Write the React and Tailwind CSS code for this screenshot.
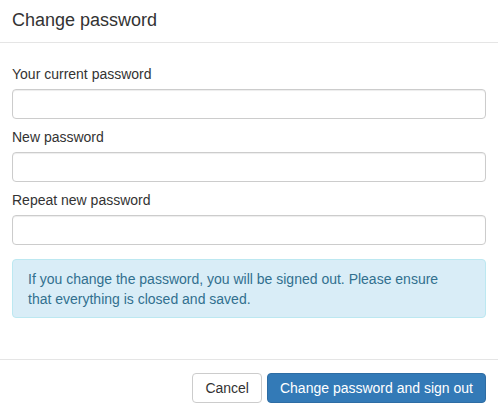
import React from 'react';

const fields = [
  { id: 'current', label: 'Your current password' },
  { id: 'new', label: 'New password' },
  { id: 'repeat', label: 'Repeat new password' },
];

export default function App() {
  return (
    <div className="w-[498px] h-[414px] bg-white text-[#333] font-['Liberation_Sans',Arial,sans-serif] text-[14px] leading-[20px] overflow-hidden">
      <div className="px-[12px] pt-[7px] pb-[9px] border-b border-[#e5e5e5]">
        <h4 className="text-[18px] leading-[26px] font-normal">Change password</h4>
      </div>

      <div className="px-[12px] pt-[21px] pb-[41px]">
        {fields.map((f) => (
          <div key={f.id} className="mb-[8px]">
            <label htmlFor={f.id} className="block mb-[5px] font-normal">{f.label}</label>
            <input
              id={f.id}
              type="password"
              className="block w-full h-[30px] px-[12px] border border-[#ccc] rounded-[4px] bg-white shadow-[inset_0_1px_1px_rgba(0,0,0,0.075)] outline-none"
            />
          </div>
        ))}
        <div className="mt-[14px] pl-[15px] pr-[35px] pt-[9px] pb-[8px] bg-[#d9edf7] border border-[#bce8f1] rounded-[4px] text-[#31708f]">
          If you change the password, you will be signed out. Please ensure that everything is closed and saved.
        </div>
      </div>

      <div className="flex justify-end gap-[5px] px-[12px] pt-[13px] pb-[12px] border-t border-[#e5e5e5]">
        <button className="h-[30px] px-[12px] border border-[#ccc] rounded-[4px] bg-white text-[#333]">Cancel</button>
        <button className="h-[30px] px-[12px] border border-[#2e6da4] rounded-[4px] bg-[#337ab7] text-white">Change password and sign out</button>
      </div>
    </div>
  );
}
